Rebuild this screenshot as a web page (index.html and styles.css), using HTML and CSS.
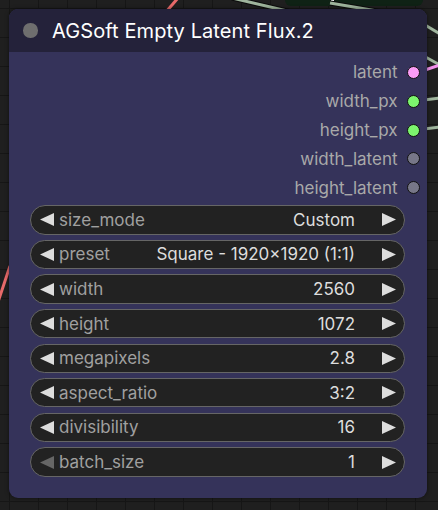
FILE: index.html
```html
<!DOCTYPE html>
<html>
<head>
<meta charset="utf-8">
<link rel="stylesheet" href="styles.css">
</head>
<body>
<div class="canvas">
  <svg class="wires" width="438" height="510" viewBox="0 0 438 510">
    <rect x="285" y="-10" width="138" height="16" rx="6" fill="#0f2215"/>
    <rect x="331" y="0" width="3" height="1.5" fill="#e8e8e8"/>
    <line x1="166" y1="12" x2="178" y2="-2" stroke="#e86a6a" stroke-width="3"/>
    <line x1="-2" y1="302" x2="10" y2="266" stroke="#e86a6a" stroke-width="3"/>
    <line x1="232" y1="-2" x2="300" y2="14" stroke="#0c0c0c" stroke-width="5"/>
    <line x1="232" y1="-2" x2="300" y2="14" stroke="#9fb59d" stroke-width="3"/>
    <line x1="330" y1="3" x2="395" y2="14" stroke="#0c0c0c" stroke-width="5"/>
    <line x1="330" y1="3" x2="395" y2="14" stroke="#9fb59d" stroke-width="3"/>
    <line x1="420" y1="22" x2="440" y2="34" stroke="#9fb59d" stroke-width="3"/>
    <line x1="420" y1="54" x2="440" y2="65" stroke="#9fb59d" stroke-width="3"/>
    <line x1="416" y1="73" x2="440" y2="65" stroke="#f090ea" stroke-width="3"/>
    <line x1="416" y1="101" x2="440" y2="98" stroke="#9fb59d" stroke-width="3"/>
    <line x1="416" y1="130" x2="440" y2="127" stroke="#9fb59d" stroke-width="3"/>
  </svg>
  <div class="node">
    <div class="title">
      <span class="title-dot"></span>
      <span class="title-text">AGSoft Empty Latent Flux.2</span>
    </div>
    <div class="body">
      <div class="outputs">
        <div class="out"><span class="out-label">latent</span><span class="slot pink"></span></div>
        <div class="out"><span class="out-label">width_px</span><span class="slot green"></span></div>
        <div class="out"><span class="out-label">height_px</span><span class="slot green"></span></div>
        <div class="out"><span class="out-label">width_latent</span><span class="slot grey"></span></div>
        <div class="out"><span class="out-label">height_latent</span><span class="slot grey"></span></div>
      </div>
      <div class="widgets">
        <div class="widget">
          <svg class="arrow" width="14" height="13" viewBox="0 0 14 13"><polygon points="14,0 14,13 0,6.5"/></svg>
          <span class="label">size_mode</span><span class="value">Custom</span>
          <svg class="arrow right" width="14" height="13" viewBox="0 0 14 13"><polygon points="0,0 0,13 14,6.5"/></svg>
        </div>
        <div class="widget">
          <svg class="arrow" width="14" height="13" viewBox="0 0 14 13"><polygon points="14,0 14,13 0,6.5"/></svg>
          <span class="label">preset</span><span class="value">Square - 1920×1920 (1:1)</span>
          <svg class="arrow right" width="14" height="13" viewBox="0 0 14 13"><polygon points="0,0 0,13 14,6.5"/></svg>
        </div>
        <div class="widget">
          <svg class="arrow" width="14" height="13" viewBox="0 0 14 13"><polygon points="14,0 14,13 0,6.5"/></svg>
          <span class="label">width</span><span class="value">2560</span>
          <svg class="arrow right" width="14" height="13" viewBox="0 0 14 13"><polygon points="0,0 0,13 14,6.5"/></svg>
        </div>
        <div class="widget">
          <svg class="arrow" width="14" height="13" viewBox="0 0 14 13"><polygon points="14,0 14,13 0,6.5"/></svg>
          <span class="label">height</span><span class="value">1072</span>
          <svg class="arrow right" width="14" height="13" viewBox="0 0 14 13"><polygon points="0,0 0,13 14,6.5"/></svg>
        </div>
        <div class="widget">
          <svg class="arrow" width="14" height="13" viewBox="0 0 14 13"><polygon points="14,0 14,13 0,6.5"/></svg>
          <span class="label">megapixels</span><span class="value">2.8</span>
          <svg class="arrow right" width="14" height="13" viewBox="0 0 14 13"><polygon points="0,0 0,13 14,6.5"/></svg>
        </div>
        <div class="widget">
          <svg class="arrow" width="14" height="13" viewBox="0 0 14 13"><polygon points="14,0 14,13 0,6.5"/></svg>
          <span class="label">aspect_ratio</span><span class="value">3:2</span>
          <svg class="arrow right" width="14" height="13" viewBox="0 0 14 13"><polygon points="0,0 0,13 14,6.5"/></svg>
        </div>
        <div class="widget">
          <svg class="arrow" width="14" height="13" viewBox="0 0 14 13"><polygon points="14,0 14,13 0,6.5"/></svg>
          <span class="label">divisibility</span><span class="value">16</span>
          <svg class="arrow right" width="14" height="13" viewBox="0 0 14 13"><polygon points="0,0 0,13 14,6.5"/></svg>
        </div>
        <div class="widget">
          <svg class="arrow dim" width="14" height="13" viewBox="0 0 14 13"><polygon points="14,0 14,13 0,6.5"/></svg>
          <span class="label">batch_size</span><span class="value">1</span>
          <svg class="arrow right" width="14" height="13" viewBox="0 0 14 13"><polygon points="0,0 0,13 14,6.5"/></svg>
        </div>
      </div>
    </div>
  </div>
</div>
</body>
</html>
```

FILE: styles.css
```css
* { box-sizing: border-box; }
html, body { margin: 0; padding: 0; }
body {
  width: 438px;
  height: 510px;
  overflow: hidden;
  font-family: Inter, "Noto Sans", sans-serif;
}
.canvas {
  position: relative;
  width: 438px;
  height: 510px;
  overflow: hidden;
  padding-top: 9px;
  padding-left: 9px;
  background-color: #1f1f1f;
  background-image:
    linear-gradient(to right, #161616 1px, transparent 1px),
    linear-gradient(to bottom, #161616 1px, transparent 1px);
  background-size: 29px 29px;
  background-position: 9px 8px;
}
.wires {
  position: absolute;
  left: 0;
  top: 0;
}
.node {
  position: relative;
  width: 418px;
  height: 489px;
  border-radius: 9px;
  background: #35335a;
  overflow: hidden;
  box-shadow: 0 0 4px rgba(0,0,0,0.5);
}
.title {
  height: 43px;
  background: #24223a;
  display: flex;
  align-items: center;
  padding-left: 14px;
}
.title-dot {
  width: 14.5px;
  height: 14.5px;
  border-radius: 50%;
  background: #6e6e6e;
  flex: none;
}
.title-text {
  margin-left: 14.5px;
  color: #ffffff;
  font-size: 20px;
  letter-spacing: 0.1px;
}
.body {
  padding-top: 6px;
}
.outputs {
  display: flex;
  flex-direction: column;
  align-items: flex-end;
  padding-right: 7.5px;
}
.out {
  height: 28.85px;
  display: flex;
  align-items: center;
  gap: 9px;
}
.out-label {
  color: #a9a9a9;
  font-size: 17px;
}
.slot {
  width: 13px;
  height: 13px;
  border-radius: 50%;
  border: 1.5px solid #111;
  flex: none;
}
.slot.pink { background: #fa9cf5; }
.slot.green { background: #7cf56d; }
.slot.grey { background: #777788; }
.widgets {
  margin-top: 3px;
  padding: 0 22px 0 21px;
  display: flex;
  flex-direction: column;
  gap: 5.3px;
}
.widget {
  height: 29.3px;
  background: #222222;
  border: 1px solid #666666;
  border-radius: 15px;
  display: flex;
  align-items: center;
  padding-left: 9px;
  padding-right: 8px;
  font-size: 17px;
}
.arrow { flex: none; fill: #dddddd; }
.arrow.dim { fill: #666666; }
.label {
  margin-left: 5px;
  color: #a0a0a0;
}
.value {
  margin-left: auto;
  color: #dddddd;
  margin-right: 27px;
}
```
